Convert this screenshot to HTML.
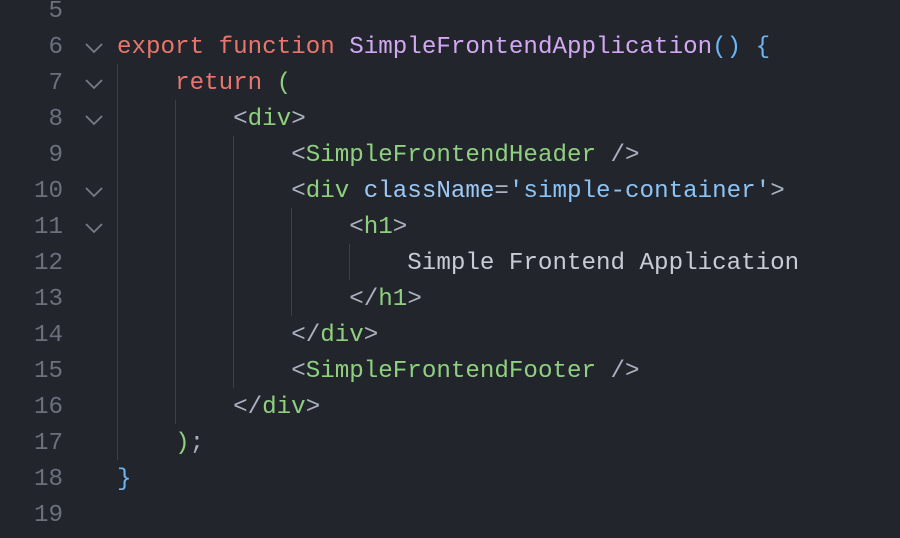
<!DOCTYPE html>
<html><head><meta charset="utf-8"><style>
html,body{margin:0;padding:0;background:#22252c;width:900px;height:538px;overflow:hidden}
.l{position:absolute;left:0;height:36px;line-height:36px;font-family:"Liberation Mono",monospace;font-size:24.2px;white-space:pre;color:#c8ccd4;margin-top:2px}
.n{position:absolute;left:0;width:63px;text-align:right;color:#6b717c}
.c{position:absolute;left:84px;top:0}
.t{position:absolute;left:117px}
.k{color:#e8766c}.f{color:#d2a8f2}.g{color:#8fd07f}.p{color:#abb2bf}.b{color:#6cb6f5}.s{color:#8cc4f5}.a{color:#9cc9f5}
.v{position:absolute;width:1px;background:#3b404a}
</style></head><body>
<div class="v" style="left:117px;top:64px;height:396px"></div>
<div class="v" style="left:175px;top:100px;height:324px"></div>
<div class="v" style="left:233px;top:136px;height:252px"></div>
<div class="v" style="left:291px;top:208px;height:108px"></div>
<div class="v" style="left:349px;top:244px;height:36px"></div>
<svg width="0" height="0" style="position:absolute"><defs><symbol id="ch" viewBox="0 0 20 36"><path d="M2 14 L10 22 L18 14" fill="none" stroke="#767c87" stroke-width="1.8"/></symbol></defs></svg>
<div class="l" style="top:-8px"><span class="n">5</span></div>
<div class="l" style="top:28px"><span class="n">6</span><svg class="c" width="20" height="36"><use href="#ch"/></svg><span class="t"><span class="k">export function </span><span class="f">SimpleFrontendApplication</span><span class="b">() {</span></span></div>
<div class="l" style="top:64px"><span class="n">7</span><svg class="c" width="20" height="36"><use href="#ch"/></svg><span class="t">    <span class="k">return </span><span class="g">(</span></span></div>
<div class="l" style="top:100px"><span class="n">8</span><svg class="c" width="20" height="36"><use href="#ch"/></svg><span class="t">        <span class="p">&lt;</span><span class="g">div</span><span class="p">&gt;</span></span></div>
<div class="l" style="top:136px"><span class="n">9</span><span class="t">            <span class="p">&lt;</span><span class="g">SimpleFrontendHeader</span><span class="p"> /&gt;</span></span></div>
<div class="l" style="top:172px"><span class="n">10</span><svg class="c" width="20" height="36"><use href="#ch"/></svg><span class="t">            <span class="p">&lt;</span><span class="g">div </span><span class="a">className</span><span class="p">=</span><span class="s">'simple-container'</span><span class="p">&gt;</span></span></div>
<div class="l" style="top:208px"><span class="n">11</span><svg class="c" width="20" height="36"><use href="#ch"/></svg><span class="t">                <span class="p">&lt;</span><span class="g">h1</span><span class="p">&gt;</span></span></div>
<div class="l" style="top:244px"><span class="n">12</span><span class="t">                    Simple Frontend Application</span></div>
<div class="l" style="top:280px"><span class="n">13</span><span class="t">                <span class="p">&lt;/</span><span class="g">h1</span><span class="p">&gt;</span></span></div>
<div class="l" style="top:316px"><span class="n">14</span><span class="t">            <span class="p">&lt;/</span><span class="g">div</span><span class="p">&gt;</span></span></div>
<div class="l" style="top:352px"><span class="n">15</span><span class="t">            <span class="p">&lt;</span><span class="g">SimpleFrontendFooter</span><span class="p"> /&gt;</span></span></div>
<div class="l" style="top:388px"><span class="n">16</span><span class="t">        <span class="p">&lt;/</span><span class="g">div</span><span class="p">&gt;</span></span></div>
<div class="l" style="top:424px"><span class="n">17</span><span class="t">    <span class="g">)</span><span class="p">;</span></span></div>
<div class="l" style="top:460px"><span class="n">18</span><span class="t"><span class="b">}</span></span></div>
<div class="l" style="top:496px"><span class="n">19</span></div>
</body></html>
